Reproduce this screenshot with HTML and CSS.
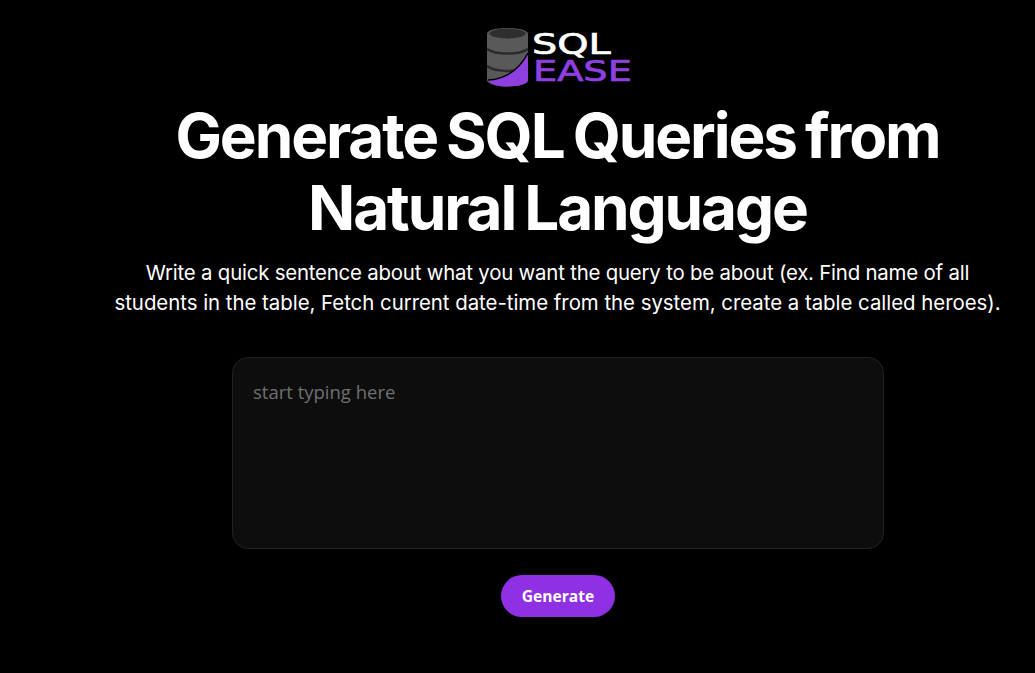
FILE: index.html
```html
<!DOCTYPE html>
<html lang="en">
<head>
<meta charset="utf-8">
<title>SQL Ease</title>
<link rel="stylesheet" href="styles.css">
</head>
<body>
<main class="page">
  <div class="logo" aria-label="SQL Ease">
    <svg class="logo-mark" width="41" height="62" viewBox="0 0 41 62" aria-hidden="true">
      <path d="M0 8C0 4 9 2 20.500 2S41 4 41 8V54C41 58 31 60.500 20.500 60.500S0 58 0 54Z" fill="#595959"/>
      <ellipse cx="20.500" cy="7.500" rx="18" ry="5" fill="#2e2e2e"/>
      <path d="M0 23C8 29 33 29 41 23M0 40C8 46 26 46 36 43" fill="none" stroke="#2b2b2b" stroke-width="2.500"/>
      <path d="M41 27V54C41 58 31 60.500 20.500 60.500C12 60.500 4 59 1 54C18 53 32 44 41 27Z" fill="#8f3fe0"/>
      <path d="M41 27C32 44 18 53 1 54" fill="none" stroke="#000" stroke-width="1.500"/>
    </svg>
    <div class="wordmark">
      <span class="word-sql">SQL</span>
      <span class="word-ease">EASE</span>
    </div>
  </div>
  <h1 class="title">Generate SQL Queries from<br>Natural Language</h1>
  <p class="lead"><span class="lead-first">Write a quick sentence about what you want the query to be about (ex. Find name of all</span><br>students in the table, Fetch current date-time from the system, create a table called heroes).</p>
  <textarea class="prompt" placeholder="start typing here"></textarea>
  <button class="generate" type="button">Generate</button>
</main>
</body>
</html>
```
FILE: styles.css
```css
* { box-sizing: border-box; }
html, body { margin: 0; background: #000; }
body { height: 673px; overflow: hidden; }
.page {
  display: flex;
  flex-direction: column;
  align-items: center;
  padding: 26px 0 0 80px;
  color: #fff;
}
.logo {
  display: flex;
  gap: 4px;
  width: 146px;
  height: 62px;
  margin-left: 5px;
  flex: none;
}
.logo-mark { display: block; flex: none; }
.wordmark {
  padding-top: 5px;
  font-family: "DejaVu Sans", sans-serif;
  font-size: 29px;
  line-height: 27px;
  -webkit-text-stroke-width: 0.7px;
}
.word-sql, .word-ease {
  display: block;
  width: max-content;
  transform-origin: left center;
}
.word-sql { color: #fff; transform: scaleX(1.37); }
.word-ease { color: #8f3fe0; margin-left: 1px; transform: scaleX(1.32); }
.title {
  margin: 12px 0 0;
  font-family: Inter, sans-serif;
  font-size: 62px;
  line-height: 72px;
  font-weight: 700;
  letter-spacing: -2.1px;
  word-spacing: -3.5px;
  text-align: center;
  white-space: nowrap;
}
.lead {
  margin: 14px 0 0;
  font-family: Inter, sans-serif;
  font-size: 20.4px;
  line-height: 30px;
  letter-spacing: -0.02px;
  text-align: center;
  white-space: nowrap;
}
.lead-first { letter-spacing: -0.2px; }
.prompt {
  display: block;
  width: 652px;
  height: 192px;
  margin-top: 39px;
  padding: 21px 20px 21px 20.500px;
  background: #0d0d0d;
  border: 1px solid #222;
  border-radius: 16px;
  outline: none;
  resize: none;
  color: #fff;
  font-family: "Open Sans", sans-serif;
  font-size: 18.500px;
  line-height: 26px;
}
.prompt::placeholder { color: #707070; opacity: 1; }
.generate {
  margin-top: 26px;
  width: 114px;
  height: 42px;
  border: 0;
  border-radius: 21px;
  background: #9030e4;
  color: #fff;
  font-family: "Open Sans", sans-serif;
  font-size: 15.600px;
  font-weight: 700;
  padding: 0 0 0 1px;
}
```
